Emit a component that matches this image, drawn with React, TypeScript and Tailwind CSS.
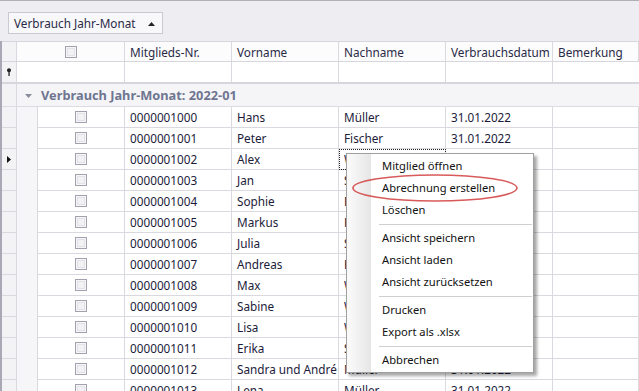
import React from "react";

const rows = [
  { nr: "0000001000", vorname: "Hans", nachname: "Müller" },
  { nr: "0000001001", vorname: "Peter", nachname: "Fischer" },
  { nr: "0000001002", vorname: "Alex", nachname: "Weber" },
  { nr: "0000001003", vorname: "Jan", nachname: "Schneider" },
  { nr: "0000001004", vorname: "Sophie", nachname: "Becker" },
  { nr: "0000001005", vorname: "Markus", nachname: "Hoffmann" },
  { nr: "0000001006", vorname: "Julia", nachname: "Schulz" },
  { nr: "0000001007", vorname: "Andreas", nachname: "Koch" },
  { nr: "0000001008", vorname: "Max", nachname: "Wagner" },
  { nr: "0000001009", vorname: "Sabine", nachname: "Wolf" },
  { nr: "0000001010", vorname: "Lisa", nachname: "Walter" },
  { nr: "0000001011", vorname: "Erika", nachname: "Schröder" },
  { nr: "0000001012", vorname: "Sandra und André", nachname: "Müller" },
  { nr: "0000001013", vorname: "Lena", nachname: "Müller" },
];

const menu: (string | null)[] = [
  "Mitglied öffnen",
  "Abrechnung erstellen",
  "Löschen",
  null,
  "Ansicht speichern",
  "Ansicht laden",
  "Ansicht zurücksetzen",
  null,
  "Drucken",
  "Export als .xlsx",
  null,
  "Abbrechen",
];

function CheckBox() {
  return (
    <div className="h-[12px] w-[12px] border border-[#a2a2ae] bg-[#f6f6f8] p-px">
      <div className="h-full w-full border border-[#e2e2e8] bg-[#f2f2f5]" />
    </div>
  );
}

const cell =
  "flex h-full items-center border-r border-[#d9d9df] pl-[5px] pt-[2px] whitespace-nowrap overflow-hidden";

export default function App() {
  return (
    <div className="relative h-[391px] w-[639px] overflow-hidden bg-white text-[11.75px] text-[#1c1c3a] [font-family:'Noto_Sans',sans-serif]">
      {/* group panel */}
      <div className="h-[41px] border-t border-[#b0b0b8] bg-[#eeeef2] pl-2 pt-[11px]">
        <div className="flex h-[22px] w-[155px] items-center justify-between border border-[#cacad2] bg-[#f8f8fa] pl-[5px] pr-[7px] pt-px text-[#2a2a46]">
          <span>Verbrauch Jahr-Monat</span>
          <svg width="7" height="4" viewBox="0 0 7 4">
            <path d="M0 4 L3.5 0 L7 4 Z" fill="#222" />
          </svg>
        </div>
      </div>

      <div className="border-l-2 border-[#a8a8b6]">
        {/* header */}
        <div className="flex h-[21px] border-y border-[#d6d6dc] bg-[#fcfcfd] text-[#2a2a46]">
          <div className="h-full w-[15px] border-r border-[#d9d9df] bg-[#f3f3f6]" />
          <div className="flex h-full w-[108px] items-center justify-center border-r border-[#d9d9df]">
            <CheckBox />
          </div>
          <div className={`${cell} w-[107px]`}>Mitglieds-Nr.</div>
          <div className={`${cell} w-[107px]`}>Vorname</div>
          <div className={`${cell} w-[107px]`}>Nachname</div>
          <div className={`${cell} w-[107px]`}>Verbrauchsdatum</div>
          <div className={`${cell} flex-1`}>Bemerkung</div>
        </div>

        {/* filter row */}
        <div className="flex h-[22px] border-b-2 border-[#d6d6dc]">
          <div className="flex h-full w-[15px] items-center justify-center border-r border-[#d9d9df] bg-[#f3f3f6]">
            <svg width="6" height="8" viewBox="0 0 6 8">
              <circle cx="3" cy="2.2" r="2" fill="#222" />
              <rect x="2.4" y="3" width="1.3" height="5" fill="#222" />
            </svg>
          </div>
          <div className="h-full w-[108px] border-r border-[#d9d9df]" />
          <div className="h-full w-[107px] border-r border-[#d9d9df]" />
          <div className="h-full w-[107px] border-r border-[#d9d9df]" />
          <div className="h-full w-[107px] border-r border-[#d9d9df]" />
          <div className="h-full w-[107px] border-r border-[#d9d9df]" />
          <div className="h-full flex-1" />
        </div>

        {/* group row */}
        <div className="flex h-[23px] border-b border-[#dcdce2]">
          <div className="h-full w-[15px] border-r border-[#d9d9df] bg-[#f3f3f6]" />
          <div className="flex flex-1 items-center bg-[#f5f5f8] pl-[8px] pt-[2px] text-[12.8px] font-bold text-[#6f7590]">
            <svg width="7" height="4" viewBox="0 0 7 4" className="mr-[9px]">
              <path d="M0 0 L7 0 L3.5 4 Z" fill="#8a8e9c" />
            </svg>
            <span>Verbrauch Jahr-Monat: 2022-01</span>
          </div>
        </div>

        {/* data rows */}
        {rows.map((r, i) => (
          <div key={r.nr} className="flex h-[21px]">
            <div className="flex h-full w-[15px] items-center justify-center border-b border-r border-[#d9d9df] bg-[#f3f3f6]">
              {i === 2 && (
                <svg width="4" height="7" viewBox="0 0 4 7">
                  <path d="M0 0 L4 3.5 L0 7 Z" fill="#111" />
                </svg>
              )}
            </div>
            <div className="h-full w-[21px] border-r border-[#d9d9df] bg-[#f6f6f9]" />
            <div className="flex h-full w-[87px] items-center justify-center border-b border-r border-[#d9d9df]">
              <CheckBox />
            </div>
            <div className={`${cell} w-[107px] border-b`}>{r.nr}</div>
            <div className={`${cell} w-[107px] border-b`}>{r.vorname}</div>
            <div
              className={`${cell} w-[107px] border-b ${
                i === 2 ? "outline-1 outline-dotted outline-offset-[-1px] outline-[#222]" : ""
              }`}
            >
              {r.nachname}
            </div>
            <div className={`${cell} w-[107px] border-b`}>31.01.2022</div>
            <div className={`${cell} flex-1 border-b`} />
          </div>
        ))}
      </div>

      {/* context menu */}
      <div className="absolute left-[346px] top-[153px] w-[188px] border border-[#a0a0a0] bg-white pb-px pt-px text-[11.2px] text-[#111] shadow-[3px_3px_3px_rgba(0,0,0,0.35)]">
        <div className="absolute bottom-0 left-0 top-0 w-[24px] bg-gradient-to-r from-[#fbfbfb] to-[#e6e6e6]" />
        {menu.map((m, i) =>
          m === null ? (
            <div key={i} className="relative flex h-[6px] items-center pl-[32px] pr-px">
              <div className="h-px w-full bg-[#cfcfcf]" />
            </div>
          ) : (
            <div key={i} className="relative flex h-[22px] items-center pl-[35px]">
              {m}
            </div>
          )
        )}
      </div>

      {/* red annotation */}
      <svg className="absolute left-[350px] top-[172px]" width="172" height="32" viewBox="0 0 172 32">
        <ellipse cx="85" cy="16" rx="82" ry="13" fill="none" stroke="#d44848" strokeWidth="1.6" opacity="0.9" />
      </svg>
    </div>
  );
}
